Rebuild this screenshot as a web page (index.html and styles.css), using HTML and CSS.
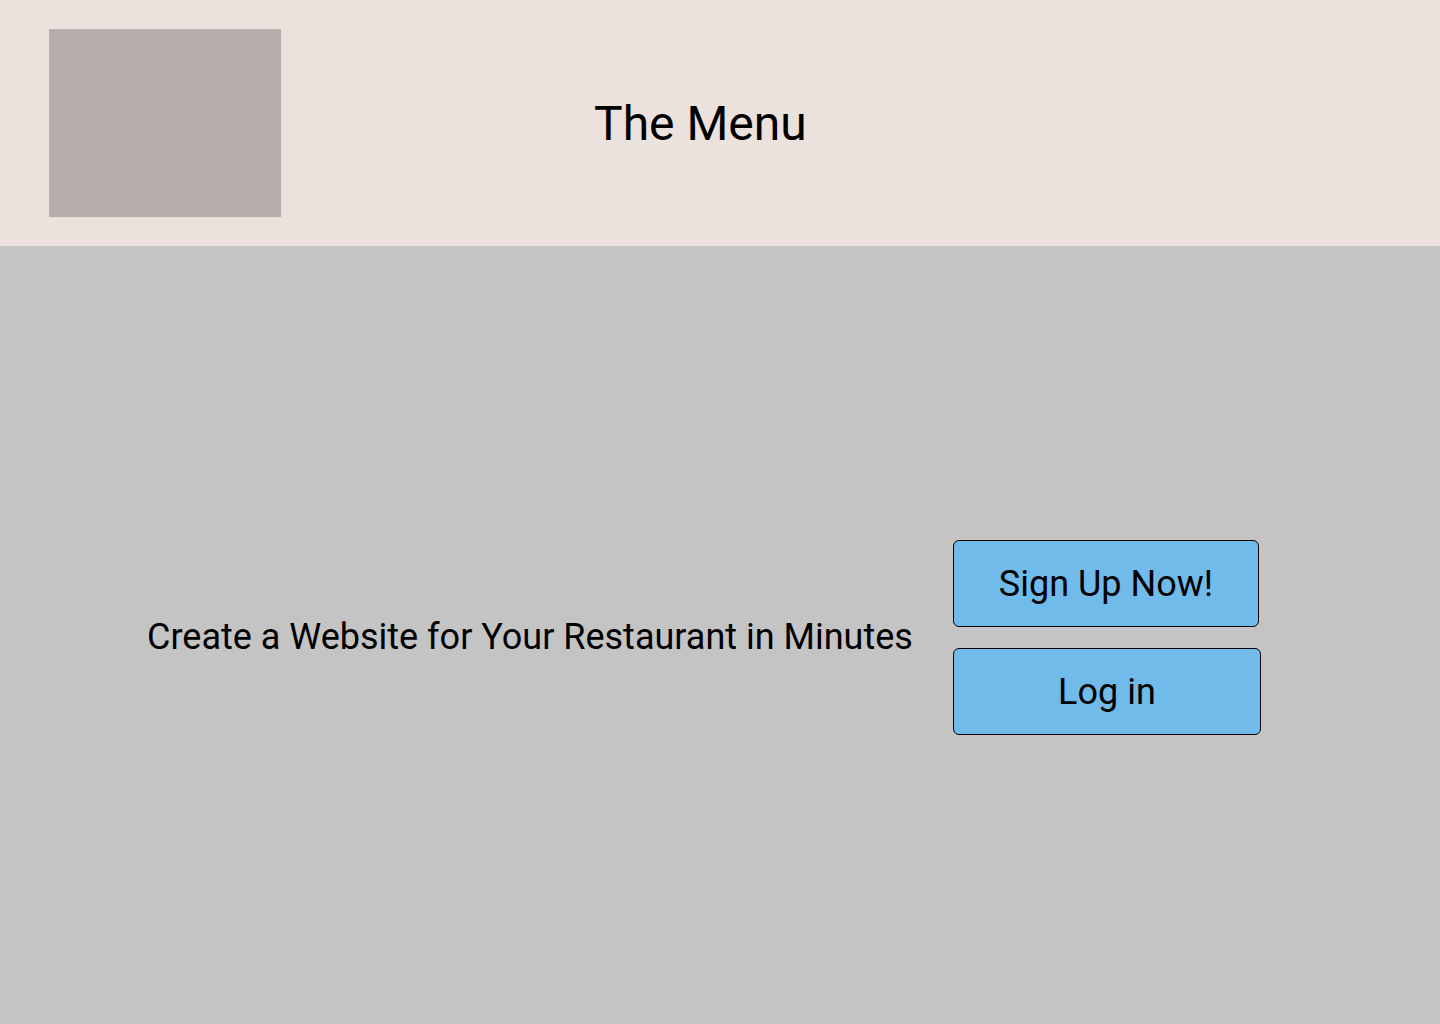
FILE: index.html
```html
<!DOCTYPE html>
<html lang="en">
<head>
<meta charset="utf-8">
<title>The Menu</title>
<link rel="stylesheet" href="styles.css">
</head>
<body>
<header class="header">
  <div class="logo"></div>
  <h1 class="title">The Menu</h1>
</header>
<main class="hero">
  <p class="tagline">Create a Website for Your Restaurant in Minutes</p>
  <div class="actions">
    <button class="btn btn-signup">Sign Up Now!</button>
    <button class="btn btn-login">Log in</button>
  </div>
</main>
</body>
</html>
```
FILE: styles.css
```css
* { box-sizing: border-box; }
html, body { margin: 0; padding: 0; }
body {
  width: 1440px;
  height: 1024px;
  display: flex;
  flex-direction: column;
  font-family: Roboto, "Liberation Sans", sans-serif;
  color: #000;
  background: #c4c4c4;
  overflow: hidden;
}
.header {
  height: 246px;
  flex: none;
  background: #ebe1dd;
  display: flex;
  align-items: center;
  padding: 0 0 0 49px;
}
.logo {
  width: 232px;
  height: 188px;
  align-self: flex-start;
  margin-top: 29px;
  background: #b7aeac;
}
.title {
  margin: 0 0 0 313px;
  padding-top: 2px;
  font-size: 48px;
  font-weight: 400;
  line-height: 1;
}
.hero {
  flex: 1;
  display: flex;
  align-items: center;
  padding-left: 147px;
}
.tagline {
  margin: 0 40px 0 0;
  padding-top: 3px;
  font-size: 36px;
  line-height: 1;
}
.actions {
  display: flex;
  flex-direction: column;
  gap: 21px;
  padding-top: 5px;
}
.btn {
  height: 87px;
  border: 1px solid #000;
  border-radius: 6px;
  background: #71bbeb;
  font-family: Roboto, "Liberation Sans", sans-serif;
  font-size: 36px;
  color: #000;
  padding: 0;
}
.btn-signup { width: 306px; }
.btn-login { width: 308px; }
```
